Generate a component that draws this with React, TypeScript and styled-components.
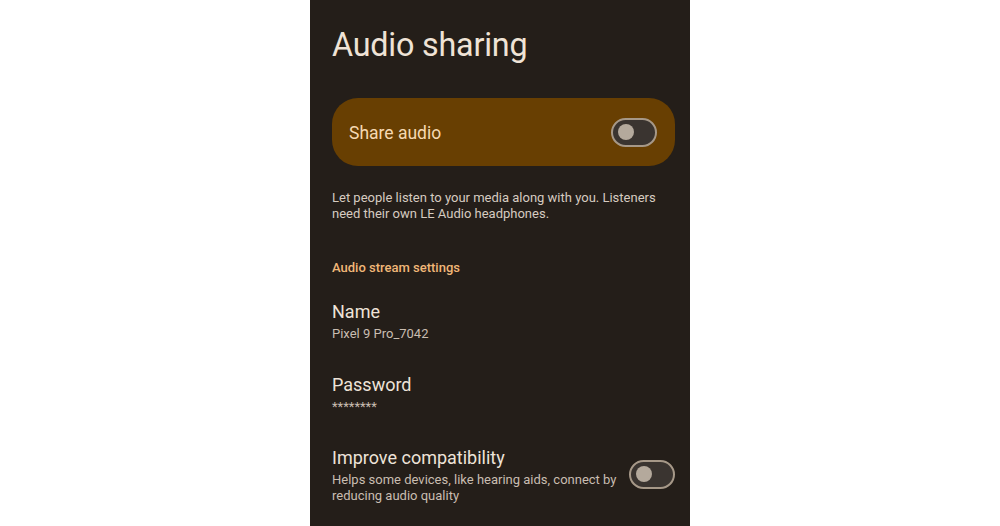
import styled, { createGlobalStyle } from "styled-components";

const GlobalStyle = createGlobalStyle`
  html, body {
    margin: 0;
    padding: 0;
    background: #ffffff;
  }
  body {
    font-family: Roboto, "Noto Sans", sans-serif;
  }
`;

const Page = styled.div`
  display: flex;
  justify-content: center;
  height: 526px;
  overflow: hidden;
`;

const Phone = styled.div`
  width: 380px;
  height: 526px;
  box-sizing: border-box;
  padding: 23px 15px 0 22px;
  background: #241e19;
  display: flex;
  flex-direction: column;
`;

const Title = styled.h1`
  margin: 0;
  font-size: 32.3px;
  line-height: 44px;
  font-weight: 400;
  color: #efe3d6;
  letter-spacing: -0.2px;
`;

const MainCard = styled.div`
  margin-top: 31px;
  height: 68px;
  border-radius: 26px;
  background: #683f02;
  display: flex;
  align-items: center;
  justify-content: space-between;
  padding: 0 18px 0 17px;
`;

const CardLabel = styled.span`
  font-size: 17.5px;
  color: #f6d9b2;
  padding-top: 2px;
`;

const Toggle = styled.div`
  width: 46px;
  height: 29px;
  box-sizing: border-box;
  border: 2px solid #a69888;
  border-radius: 15px;
  background: #3a3430;
  display: flex;
  align-items: center;
  padding-left: 5px;
`;

const Thumb = styled.div`
  width: 16px;
  height: 16px;
  border-radius: 50%;
  background: #b4a99c;
`;

const Description = styled.p`
  margin: 24px 0 0;
  font-size: 13px;
  line-height: 16px;
  color: #d6cbc0;
`;

const SectionHeader = styled.div`
  margin-top: 38px;
  font-size: 13px;
  line-height: 16px;
  font-weight: 500;
  color: #f1b778;
`;

const Item = styled.div<{ $gap?: number }>`
  display: flex;
  align-items: center;
  justify-content: space-between;
  margin-top: ${p => p.$gap ?? 29}px;
`;

const ItemText = styled.div`
  display: flex;
  flex-direction: column;
`;

const ItemTitle = styled.div`
  font-size: 18px;
  line-height: 27px;
  color: #eee3d8;
`;

const ItemSub = styled.div`
  margin-top: 1px;
  font-size: 13px;
  line-height: 16px;
  color: #c9bdb1;
  max-width: 290px;
`;

function Switch() {
  return (
    <Toggle>
      <Thumb />
    </Toggle>
  );
}

export default function App() {
  return (
    <Page>
      <GlobalStyle />
      <Phone>
        <Title>Audio sharing</Title>
        <MainCard>
          <CardLabel>Share audio</CardLabel>
          <Switch />
        </MainCard>
        <Description>
          Let people listen to your media along with you. Listeners need their
          own LE Audio headphones.
        </Description>
        <SectionHeader>Audio stream settings</SectionHeader>
        <Item $gap={22}>
          <ItemText>
            <ItemTitle>Name</ItemTitle>
            <ItemSub>Pixel 9 Pro_7042</ItemSub>
          </ItemText>
        </Item>
        <Item>
          <ItemText>
            <ItemTitle>Password</ItemTitle>
            <ItemSub>********</ItemSub>
          </ItemText>
        </Item>
        <Item>
          <ItemText>
            <ItemTitle>Improve compatibility</ItemTitle>
            <ItemSub>
              Helps some devices, like hearing aids, connect by reducing audio
              quality
            </ItemSub>
          </ItemText>
          <Switch />
        </Item>
      </Phone>
    </Page>
  );
}
